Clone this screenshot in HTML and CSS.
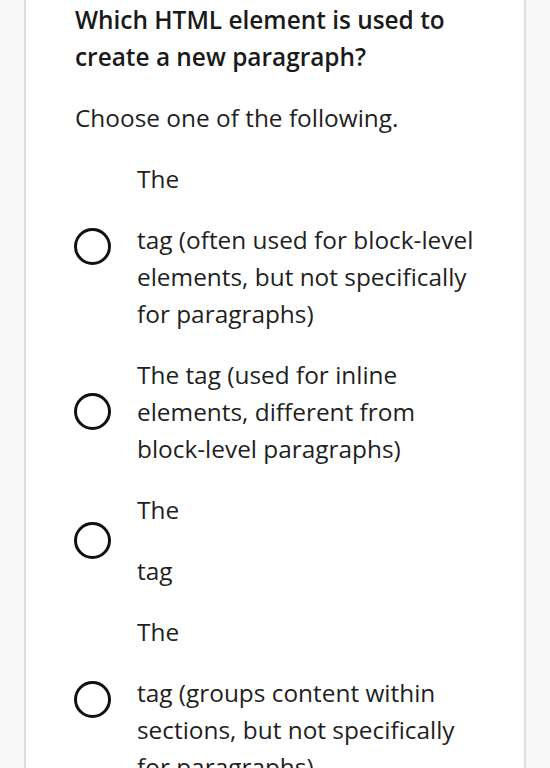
FILE: index.html
```html
<!DOCTYPE html>
<html lang="en">
<head>
<meta charset="utf-8">
<title>Quiz question</title>
<link rel="stylesheet" href="styles.css">
</head>
<body>
<main class="card">
  <h2 class="question">Which HTML element is used to create a new paragraph?</h2>
  <p class="hint">Choose one of the following.</p>
  <ul class="options">
    <li class="option">
      <span class="radio"></span>
      <div class="label">
        <p>The</p>
        <p>tag (often used for block-level elements, but not specifically for paragraphs)</p>
      </div>
    </li>
    <li class="option">
      <span class="radio"></span>
      <div class="label">
        <p>The tag (used for inline elements, different from block-level paragraphs)</p>
      </div>
    </li>
    <li class="option">
      <span class="radio"></span>
      <div class="label">
        <p>The</p>
        <p>tag</p>
      </div>
    </li>
    <li class="option">
      <span class="radio"></span>
      <div class="label">
        <p>The</p>
        <p>tag (groups content within sections, but not specifically for paragraphs)</p>
      </div>
    </li>
  </ul>
</main>
</body>
</html>
```

FILE: styles.css
```css
html, body {
  margin: 0;
  padding: 0;
}

body {
  background: #f8f8f8;
  font-family: "Open Sans", "Noto Sans", sans-serif;
  color: #1f1f1f;
  font-size: 24.4px;
  line-height: 37px;
}

.card {
  margin: 0 24px;
  min-height: 768px;
  background: #ffffff;
  border-left: 2px solid #dddddd;
  border-right: 2px solid #dddddd;
  padding: 1px 36px 0 49px;
  box-sizing: border-box;
}

.question {
  margin: 0;
  font-size: 24.4px;
  line-height: 37px;
  font-weight: 600;
  color: #1a1a1a;
}

.hint {
  margin: 24px 0 0;
}

.options {
  list-style: none;
  margin: 24px 0 0;
  padding: 0;
  display: flex;
  flex-direction: column;
  gap: 24px;
}

.option {
  display: flex;
  align-items: center;
  gap: 26px;
}

.radio {
  flex: none;
  width: 37px;
  height: 37px;
  box-sizing: border-box;
  border: 3px solid #111111;
  border-radius: 50%;
  margin-left: -1px;
}

.label {
  flex: 1;
  display: flex;
  flex-direction: column;
  gap: 24px;
}

.label p {
  margin: 0;
}
```
